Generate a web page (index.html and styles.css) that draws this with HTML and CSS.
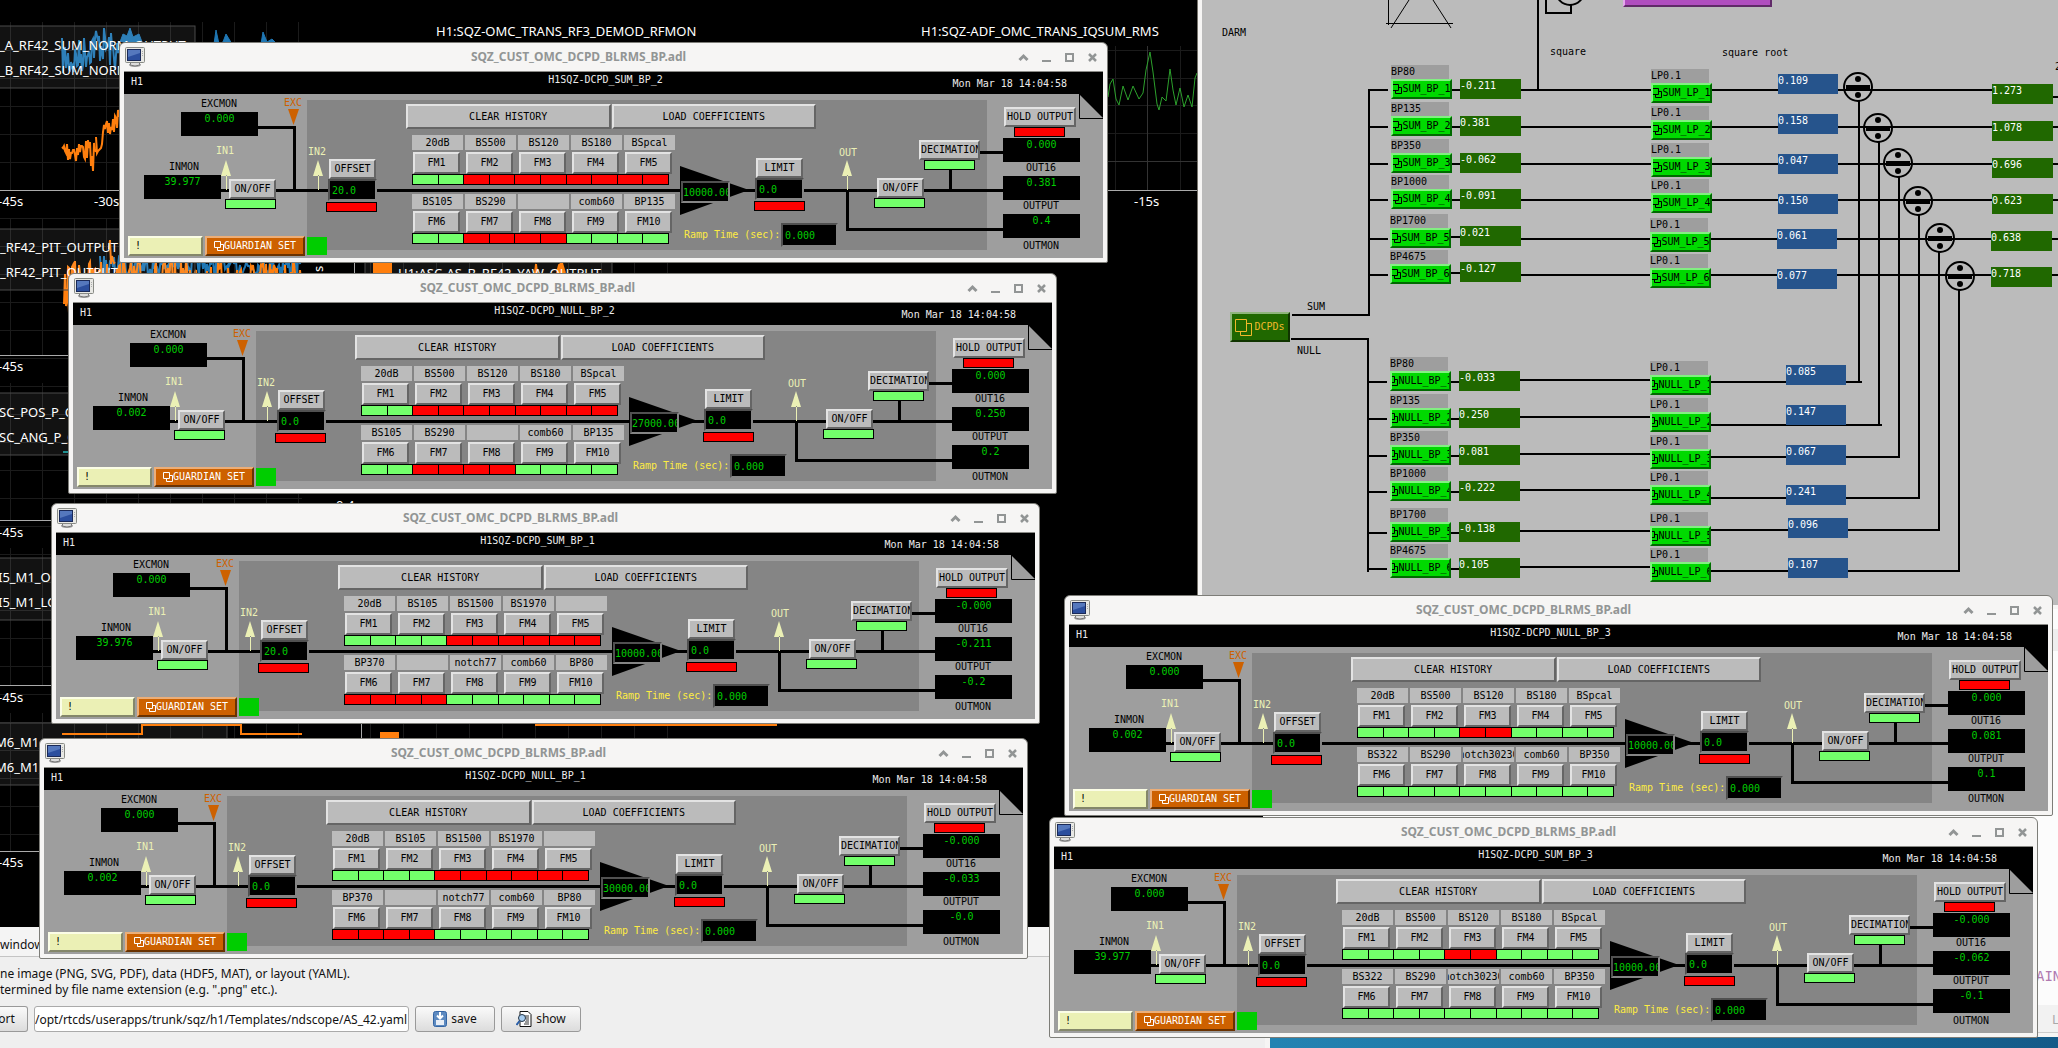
FILE: index.html
```html
<!DOCTYPE html>
<html lang="en">
<head>
<meta charset="utf-8">
<title>SQZ control room desktop</title>
<link rel="stylesheet" href="styles.css">
</head>
<body>
<svg class="sprites" aria-hidden="true">
  <symbol id="monitor" viewBox="0 0 20 20">
    <ellipse cx="10" cy="18" rx="6" ry="2" fill="#aaa"/>
    <path d="M6 15h8l1 3q-5 2-10 0z" fill="#ddd" stroke="#777"/>
    <rect x=".5" y=".5" width="19" height="15" rx="1" fill="#e8e8e4" stroke="#888a85"/>
    <rect x="2.500" y="2.500" width="13" height="11" fill="#2c4f9e" stroke="#1b2a58"/>
    <path d="M3 3h12v3L3 10z" fill="#5578bd"/>
    <path d="M17.500 4v5" stroke="#aaa" stroke-dasharray="1 1"/>
  </symbol>
  <symbol id="related" viewBox="0 0 10 10">
    <path d="M.5.5h6v6h-6zM6.500 3.500h3v6h-6v-3" fill="none" stroke="currentColor"/>
  </symbol>
</svg>

<div class="desktop">
  <section class="scope" aria-label="ndscope plots">
    <svg class="plots" id="plots"></svg>
  </section>

  <section class="export">
    <div class="tabs">window</div>
    <p class="hint">ne image (PNG, SVG, PDF), data (HDF5, MAT), or layout (YAML).<br>termined by file name extension (e.g. ".png" etc.).</p>
    <form class="actions">
      <button type="button" class="export-btn">ort</button>
      <input type="text" class="path" aria-label="Export path" value="/opt/rtcds/userapps/trunk/sqz/h1/Templates/ndscope/AS_42.yaml">
      <button type="button" class="save">
        <svg width="14" height="16" viewBox="0 0 14 16"><rect x=".5" y=".5" width="13" height="15" rx="2" fill="#5d8ac0" stroke="#3465a4"/><rect x="3" y="9" width="8" height="5" fill="#e8eef6"/><path d="M7 1v6M4 4.500l3 3 3-3" stroke="#fff" stroke-width="2" fill="none"/></svg>
        save</button>
      <button type="button" class="show">
        <svg width="16" height="16" viewBox="0 0 16 16"><path d="M4 .5h8l3 3v12H4z" fill="#fff" stroke="#111"/><path d="M9 5h4M10 7h3M10 9h3M9 11h4M8 13h5" stroke="#333"/><circle cx="6" cy="7" r="3.500" fill="#a8cdf0" stroke="#234"/><path d="M3.500 10L.5 14" stroke="#2a5ea8" stroke-width="2"/></svg>
        show</button>
    </form>
  </section>

  <section class="editor">
    <div class="editor-bar"></div>
    <div class="editor-code">AIN</div>
    <div class="editor-foot">L</div>
  </section>

  <section class="diagram" id="diagram" aria-label="SQZ BLRMS overview"></section>
  <div id="windows"></div>
</div>
<script src="app.js"></script>
</body>
</html>
```

FILE: styles.css
```css
* { box-sizing: border-box; }
body { margin: 0; font-family: "Noto Sans", sans-serif; background: #000; }
.sprites { position: absolute; width: 0; height: 0; }
.desktop {
  position: relative;
  min-height: 100vh;
  overflow: hidden;
  background: linear-gradient(90deg, #2383b2 62%, #145a88);
}
button, input { font: inherit; color: inherit; margin: 0; padding: 0; border-radius: 0; }

/* ndscope plots and export panel */
.scope { position: absolute; left: 0; top: 0; width: 1263px; height: 927px; background: #000; overflow: hidden; }
.plots { display: block; width: 100%; height: 100%; }
.plots text { fill: #fff; font: 13px "Noto Sans", sans-serif; }
.export {
  position: absolute; left: 0; top: 927px; bottom: 0; width: 1270px;
  background: #efefef; border-right: 5px solid #f6f5f4;
  font-size: 12px; line-height: 16px; color: #111;
}
.tabs { height: 30px; padding-top: 8px; line-height: 20px; background: #f4f4f4; border-bottom: 1px solid #c4c4c4; }
.hint { margin: 0; padding-top: 9px; }
.actions { display: flex; gap: 6px; margin-top: 8px; }
.actions button {
  display: flex; align-items: center; justify-content: center; gap: 4px;
  width: 80px; height: 26px;
  background: linear-gradient(#fafafa, #dcdcdc);
  border: 1px solid #999; border-radius: 3px;
}
.actions .export-btn { width: 28px; padding-right: 14px; border-left: 0; border-radius: 0 3px 3px 0; }
.path { width: 375px; height: 26px; border: 1px solid #aaa; border-radius: 3px; background: #fff; }

/* editor window behind everything on the right */
.editor {
  position: absolute; left: 1263px; right: 0; top: 605px; bottom: 11px;
  display: flex; flex-direction: column;
  background: #fcfcfc; border-top: 4px solid #f6f5f4; border-bottom: 4px solid #f6f5f4;
}
.editor-bar { height: 22px; margin-top: 20px; background: #eee; }
.editor-code { flex: 1; padding: 315px 0 0 773px; overflow: hidden; font: 14px/20px "DejaVu Sans Mono", monospace; color: #b07ab0; white-space: nowrap; }
.editor-foot { height: 28px; padding-left: 789px; font-size: 13px; line-height: 28px; color: #aaa; background: #f2f2f2; border-bottom: 1px solid #ccc; }

/* small fixed-pitch text used by every MEDM screen */
.medm, .diagram { font: 10px/12px "DejaVu Sans Mono", monospace; color: #000; white-space: nowrap; }

/* MEDM windows */
.medm {
  position: absolute; width: 989px; height: 221px;
  padding: 0 4px 4px;
  background: #f6f5f4; border: 1px solid #7d7d78; border-radius: 6px 6px 2px 2px;
  overflow: hidden;
}
.titlebar {
  display: flex; align-items: center; gap: 8px;
  height: 29px; padding: 0 3px 0 1px; border-bottom: 1px solid #8a8a86;
  font: bold 12px/18px "Noto Sans", sans-serif; color: #929595;
}
.titlebar h2 { flex: 1; margin: 0; padding-right: 4px; font: inherit; text-align: center; }
.titlebar button { display: grid; place-items: center; width: 15px; height: 15px; border: 0; background: none; }
.screen { position: relative; height: 186px; background: #9e9e9e; }
.head { display: flex; justify-content: space-between; height: 22px; padding: 2px 36px 0 7px; background: #000; color: #ececec; }
.head .name { padding-left: 14px; }
.head span:first-child { padding-top: 2px; width: 114px; }
.head time { padding-top: 4px; width: 115px; text-align: right; }
.fade { position: absolute; left: 183px; top: 28px; width: 680px; height: 150px; background: #858585; }
.wires { position: absolute; left: 0; top: 0; width: 979px; height: 186px; }

.lab { position: absolute; text-align: center; width: 78px; }
.mon { position: absolute; width: 77px; height: 24px; padding-top: 1px; background: #000; color: #00cd00; text-align: center; }
.btn { border: 2px solid; border-color: #e3e3e3 #656565 #656565 #e3e3e3; background: #bbb; text-align: center; overflow: hidden; white-space: nowrap; }
.btn.place { position: absolute; width: 47px; height: 20px; line-height: 16px; }
.entry { position: absolute; width: 49px; height: 22px; padding: 0 0 0 2px; border: 2px solid; border-color: #505050 #858585 #858585 #505050; background: #000; color: #00cd00; }
.led { position: absolute; width: 51px; height: 10px; border: 1px solid #000; background: #73ff6b; }
.led.off { background: #f00; }

.l-exc { left: 56px; top: 26px; }
.m-exc { left: 57px; top: 40px; }
.l-excpt { left: 130px; top: 25px; color: #cd6100; }
.l-in { left: 21px; top: 89px; }
.m-in { left: 20px; top: 103px; }
.l-in1 { left: 62px; top: 73px; color: #ebf0b5; }
.l-in2 { left: 154px; top: 74px; color: #ebf0b5; }
.l-outpt { left: 685px; top: 75px; color: #ebf0b5; }
.b-in { left: 105px; top: 107px; }
.d-in { left: 101px; top: 127px; }
.b-off { left: 205px; top: 87px; }
.e-off { left: 204px; top: 107px; }
.d-off { left: 202px; top: 130px; }
.b-lim { left: 632px; top: 86px; }
.e-lim { left: 631px; top: 106px; }
.d-lim { left: 630px; top: 129px; }
.medm .e-gain { left: 557px; top: 109px; padding-left: 0; }
.l-ramp { left: 560px; top: 157px; width: 98px; color: #fdec42; text-align: left; }
.medm .e-ramp { left: 657px; top: 151px; width: 57px; height: 24px; }
.b-out { left: 753px; top: 106px; }
.d-out { left: 750px; top: 126px; }
.medm .b-dec { left: 795px; top: 68px; width: 61px; }
.d-dec { left: 800px; top: 88px; }
.medm .b-hold { left: 880px; top: 35px; width: 72px; }
.d-hold { left: 890px; top: 55px; }
.m-o1 { left: 879px; top: 66px; }
.m-o2 { left: 879px; top: 104px; }
.m-o3 { left: 879px; top: 142px; }
.l-o1 { left: 878px; top: 90px; }
.l-o2 { left: 878px; top: 128px; }
.l-o3 { left: 878px; top: 168px; }

.bank { position: absolute; left: 282px; top: 32px; width: 410px; }
.bank-cmds { display: grid; grid-template-columns: 1fr 1fr; gap: 1px; height: 25px; }
.filters { display: grid; grid-template-columns: repeat(5, 51px); column-gap: 2px; margin: 6px 0 0 6px; row-gap: 2px; }
.filters + .filters { margin-top: 9px; }
.tag { height: 15px; line-height: 15px; background: #bbb; text-align: center; overflow: hidden; }
.long { display: flex; justify-content: center; }
.filters .btn { width: 47px; height: 22px; margin-left: 1px; line-height: 18px; }
.leds { grid-column: 1 / -1; display: grid; grid-template-columns: repeat(10, 1fr); width: 257px; height: 11px; margin-top: -2px; background: #000; gap: 1px; border: 1px solid #000; }
.leds i { background: #73ff6b; }
.leds i.off { background: #f00; }

.foot { position: absolute; left: 4px; top: 164px; display: flex; align-items: center; gap: 2px; }
.foot .note { width: 75px; height: 20px; padding: 2px 0 0 5px; border: 2px solid; border-color: #fbfde6 #84876a #84876a #fbfde6; background: #ebf0b5; }
.foot .guard { display: flex; align-items: center; justify-content: center; width: 100px; height: 20px; border: 2px solid; border-color: #ecae78 #6a3200 #6a3200 #ecae78; background: #cd6100; color: #fff; }
.ok { width: 20px; height: 18px; background: #00cd00; }

/* overview diagram */
.diagram { position: absolute; left: 1197px; right: 0; top: 0; height: 605px; border-left: 1px solid #77746c; background: #f6f5f4; padding-left: 4px; }
.canvas { position: relative; height: 100%; background: #bbb; overflow: hidden; }
.canvas > svg { position: absolute; left: 0; top: 0; width: 856px; height: 605px; }
.canvas > p { position: absolute; margin: 0; }
.link { position: absolute; width: 60px; }
.link p { margin: 0; height: 14px; width: 58px; line-height: 14px; background: #9e9e9e; }
.link a { display: flex; align-items: center; justify-content: center; width: 61px; height: 20px; border: 2px solid; border-color: #82f082 #006a00 #006a00 #82f082; background: #00d900; color: #000; text-decoration: none; overflow: hidden; line-height: 14px; }
.link svg, .guard svg { flex: none; }
.read { position: absolute; width: 61px; height: 20px; padding-top: 1px; background: #206800; color: #fff; }
.read.root { width: 60px; background: #26548c; }
.dcpds { position: absolute; left: 28px; top: 312px; display: flex; align-items: center; justify-content: center; gap: 2px; width: 60px; height: 30px; border: 2px solid; border-color: #8fb57c #103400 #103400 #8fb57c; background: #206800; color: #f0b82a; text-decoration: none; }
.purple { position: absolute; left: 421px; top: 0; width: 149px; height: 7px; background: #b04ebf; border: 2px solid; border-color: transparent #602a68 #602a68 #e4a8ec; border-top: 0; }
```

FILE: app.js
```js
const icon = (id, s) => `<svg width="${s}" height="${s}"><use href="#${id}"/></svg>`;

/* ---------- MEDM filter windows ---------- */
const G = true, R = false;
const base = ['20dB', 'BS500', 'BS120', 'BS180', 'BSpcal'];
const base1 = ['20dB', 'BS105', 'BS1500', 'BS1970', ''];
const screens = [
  { x: 119, y: 42, name: 'SUM_BP_2', inmon: '39.977', offset: '20.0', gain: '10000.00', out: ['0.000', '0.381', '0.4'],
    a: base, b: ['BS105', 'BS290', '', 'comb60', 'BP135'], la: [G, R, R, R, R], lb: [G, R, R, G, G] },
  { x: 68, y: 273, name: 'NULL_BP_2', inmon: '0.002', offset: '0.0', gain: '27000.00', out: ['0.000', '0.250', '0.2'],
    a: base, b: ['BS105', 'BS290', '', 'comb60', 'BP135'], la: [G, R, R, R, R], lb: [G, R, R, G, G] },
  { x: 51, y: 503, name: 'SUM_BP_1', inmon: '39.976', offset: '20.0', gain: '10000.00', out: ['-0.000', '-0.211', '-0.2'],
    a: base1, b: ['BP370', '', 'notch77', 'comb60', 'BP80'], la: [G, G, R, R, R], lb: [R, R, G, G, G] },
  { x: 39, y: 738, name: 'NULL_BP_1', inmon: '0.002', offset: '0.0', gain: '30000.00', out: ['-0.000', '-0.033', '-0.0'],
    a: base1, b: ['BP370', '', 'notch77', 'comb60', 'BP80'], la: [G, G, R, R, R], lb: [R, R, G, G, G] },
  { x: 1064, y: 595, name: 'NULL_BP_3', inmon: '0.002', offset: '0.0', gain: '10000.00', out: ['0.000', '0.081', '0.1'],
    a: base, b: ['BS322', 'BS290', 'notch30230', 'comb60', 'BP350'], la: [G, G, R, G, G], lb: [G, G, G, G, G] },
  { x: 1049, y: 817, name: 'SUM_BP_3', inmon: '39.977', offset: '0.0', gain: '10000.00', out: ['-0.000', '-0.062', '-0.1'],
    a: base, b: ['BS322', 'BS290', 'notch30230', 'comb60', 'BP350'], la: [G, G, R, G, G], lb: [G, G, G, G, G] },
];

const bank = (tags, leds, first) => `
  <div class="filters">
    ${tags.map(t => `<span class="tag${t.length > 8 ? ' long' : ''}">${t}</span>`).join('')}
    ${tags.map((t, i) => `<button class="btn">FM${first + i}</button>`).join('')}
    <div class="leds">${leds.map(on => `<i class="${on ? '' : 'off'}"></i>`.repeat(2)).join('')}</div>
  </div>`;

const arrow = (x, y) => `<path d="M${x} ${y}l-5 16h10zM${x} ${y + 15}h1v15h-1z" fill="#ebf0b5"/>`;

const win = s => `
<section class="medm" style="left:${s.x}px;top:${s.y}px">
  <header class="titlebar">${icon('monitor', 20)}<h2>SQZ_CUST_OMC_DCPD_BLRMS_BP.adl</h2>
    <button aria-label="Shade"><svg width="11" height="9" viewBox="0 0 11 9"><path d="M1.500 7l4-4 4 4" fill="none" stroke="#929595" stroke-width="3"/></svg></button>
    <button aria-label="Minimize"><svg width="9" height="9"><path d="M0 8h9" stroke="#929595" stroke-width="2"/></svg></button>
    <button aria-label="Maximize"><svg width="9" height="9"><rect x="1" y="1" width="7" height="7" fill="none" stroke="#929595" stroke-width="2"/></svg></button>
    <button aria-label="Close"><svg width="9" height="9"><path d="M1 1l7 7M8 1l-7 7" stroke="#929595" stroke-width="2.500"/></svg></button>
  </header>
  <div class="screen">
    <div class="head"><span>H1</span><span class="name">H1SQZ-DCPD_${s.name}</span><time>Mon Mar 18 14:04:58</time></div>
    <div class="fade"></div>
    <svg class="wires">
      <path d="M134 55.500H170.500V118M97 118.500H879M723.500 118V157.500H879M826.500 98V118M856 80.500H879" fill="none" stroke="#000" stroke-width="3"/>
      <path d="M164 37h11l-5.500 16z" fill="#cd6100"/>
      ${arrow(102, 88)}${arrow(194, 88)}${arrow(723, 88)}
      <path d="M556 94l69 24-69 25z"/>
      <path d="M955 22h24v24z"/><path d="M955.500 22v24.500H979" fill="none" stroke="#000"/>
    </svg>
    <span class="lab l-exc">EXCMON</span><output class="mon m-exc">0.000</output>
    <span class="lab l-excpt">EXC</span><span class="lab l-in1">IN1</span><span class="lab l-in2">IN2</span>
    <span class="lab l-in">INMON</span><output class="mon m-in">${s.inmon}</output>
    <button class="btn place b-in">ON/OFF</button><i class="led d-in"></i>
    <button class="btn place b-off">OFFSET</button><input class="entry e-off" aria-label="Offset" value="${s.offset}"><i class="led off d-off"></i>
    <div class="bank">
      <div class="bank-cmds"><button class="btn">CLEAR HISTORY</button><button class="btn">LOAD COEFFICIENTS</button></div>
      ${bank(s.a, s.la, 1)}${bank(s.b, s.lb, 6)}
    </div>
    <input class="entry e-gain" aria-label="Gain" value="${s.gain}">
    <button class="btn place b-lim">LIMIT</button><input class="entry e-lim" aria-label="Limit" value="0.0"><i class="led off d-lim"></i>
    <label class="ramp"><span class="lab l-ramp">Ramp Time (sec):</span><input class="entry e-ramp" value="0.000"></label>
    <span class="lab l-outpt">OUT</span>
    <button class="btn place b-out">ON/OFF</button><i class="led d-out"></i>
    <button class="btn place b-dec">DECIMATION</button><i class="led d-dec"></i>
    <button class="btn place b-hold">HOLD OUTPUT</button><i class="led off d-hold"></i>
    <output class="mon m-o1">${s.out[0]}</output><span class="lab l-o1">OUT16</span>
    <output class="mon m-o2">${s.out[1]}</output><span class="lab l-o2">OUTPUT</span>
    <output class="mon m-o3">${s.out[2]}</output><span class="lab l-o3">OUTMON</span>
    <div class="foot"><div class="note">!</div><button class="guard">${icon('related', 10)}GUARDIAN SET</button><i class="ok"></i></div>
  </div>
</section>`;
document.getElementById('windows').innerHTML = screens.map(win).join('');

/* ---------- overview diagram (coordinates are inside the canvas) ---------- */
const X = v => v - 1202;
const names = ['BP80', 'BP135', 'BP350', 'BP1000', 'BP1700', 'BP4675'];
const sum = { bp: ['-0.211', '0.381', '-0.062', '-0.091', '0.021', '-0.127'], lp: ['0.109', '0.158', '0.047', '0.150', '0.061', '0.077'],
  ratio: ['1.273', '1.078', '0.696', '0.623', '0.638', '0.718'] };
const nul = { bp: ['-0.033', '0.250', '0.081', '-0.222', '-0.138', '0.105'], lp: ['0.085', '0.147', '0.067', '0.241', '0.096', '0.107'] };
const sumTop = [65, 102, 139, 175, 214, 250], sumY = [90, 127, 164, 200, 239, 275];
const rootTop = [74, 114, 154, 194, 229, 269], ratioTop = [84, 121, 158, 194, 231, 267];
const nulTop = [357, 394, 431, 467, 508, 544], nulRoot = [365, 405, 445, 485, 518, 558];
const nulOut = [382, 425, 457, 498, 530, 571];
const circles = [[1858, 87], [1878, 128], [1898, 163], [1918, 201], [1940, 238], [1960, 276]];
let nodes = '', d = '', marks = '';
const link = (x, y, tag, name) => { nodes += `<div class="link" style="left:${X(x)}px;top:${y}px"><p>${tag}</p><a href="#">${icon('related', 10)}${name}</a></div>`; };
const read = (x, y, v, c = '') => { nodes += `<output class="read ${c}" style="left:${X(x)}px;top:${y}px">${v}</output>`; };
const h = (x1, x2, y) => { d += `M${X(x1)} ${y}H${X(x2)}`; };
const v = (x, y1, y2) => { d += `M${X(x)} ${y1}V${y2}`; };
for (let i = 0; i < 6; i++) {
  const o = i > 3 ? 1 : 0;
  link(1391 - o, sumTop[i], names[i], `SUM_BP_${i + 1}`);
  read(1460, [79, 116, 153, 189, 226, 262][i], sum.bp[i]);
  link(1651 - o, sumTop[i] + 4, 'LP0.1', `SUM_LP_${i + 1}`);
  read(1778 - o, rootTop[i], sum.lp[i], 'root');
  read(1992 - o, ratioTop[i], sum.ratio[i]);
  h(1369, 1388, sumY[i]); h(1450, 1462, o ? sumY[i] - 2 : sumY[i]); h(1520, 1994, sumY[i]);
  h(2052, 2058, i ? sumY[i] : 97);
  link(1390, nulTop[i], names[i], `NULL_BP_${i + 1}`);
  read(1459, nulTop[i] + 14, nul.bp[i]);
  link(1650, nulTop[i] + 4, 'LP0.1', `NULL_LP_${i + 1}`);
  read(i > 3 ? 1788 : 1786, nulRoot[i], nul.lp[i], 'root');
  h(1367, 1387, nulTop[i] + 25); h(1450, 1460, nulTop[i] + 25); h(1519, 1651, nulTop[i] + 23);
  h(1710, 1860 + 20 * i + (i < 2 ? 2 : 0), nulOut[i]);
  const [cx, cy] = circles[i];
  v(1859 + 20 * i, cy + 14, nulOut[i] + 1);
  marks += `<g transform="translate(${X(cx)} ${cy})"><circle r="14" fill="none" stroke="#000" stroke-width="2"/><path d="M-12-2h24v5h-24z"/><circle cy="-8" r="3"/><circle cy="8" r="3"/></g>`;
}
v(1369, 89, 316); h(1292, 1370, 315); v(1368, 338, 572); h(1291, 1369, 339); v(1538, 0, 90);
document.getElementById('diagram').innerHTML = `<div class="canvas">
  <svg><path d="${d}" fill="none" stroke="#000" stroke-width="2"/>${marks}
    <path d="M186.500 0V25M184 23.500H251M207 0L189 28M231 0l18 28" fill="none" stroke="#000"/>
    <path d="M344 0V13H369V5" fill="none" stroke="#000" stroke-width="2"/><circle cx="368" cy="-9" r="14" fill="none" stroke="#000" stroke-width="2"/></svg>
  <div class="purple"></div>
  <p style="left:${X(1222)}px;top:27px">DARM</p><p style="left:${X(1550)}px;top:46px">square</p>
  <p style="left:${X(1722)}px;top:47px">square root</p><p style="left:${X(2055)}px;top:61px">2</p>
  <p style="left:${X(1307)}px;top:301px">SUM</p><p style="left:${X(1297)}px;top:345px">NULL</p>
  <a class="dcpds" href="#"><svg width="17" height="17"><path d="M.5.5h11v12H.5zM11.500 4.500h5v12h-11v-4" fill="none" stroke="currentColor"/></svg>DCPDs</a>${nodes}</div>`;

/* ---------- ndscope plots ---------- */
let seed = 7;
const rnd = () => (seed = (seed * 16807) % 2147483647) / 2147483647;
const trace = (x1, x2, mid, amp, color, step = 1, w = 2) => {
  let p = '';
  for (let x = x1; x <= x2; x += step) p += `${x},${Math.round(mid(x) + (rnd() - .5) * amp)} `;
  return `<polyline points="${p}" fill="none" stroke="${color}" stroke-width="${w}"/>`;
};
const blue = '#1f77b4', orange = '#ff7f0e';
let grid = '';
for (let x = 10; x < 302; x += 32) grid += `M${x}.5 22V190M${x}.5 218V355M${x}.5 383V520M${x}.5 548V685M${x}.5 713V851`;
for (let y = 50; y < 860; y += 28) grid += `M0 ${y}.5H302`;
for (let x = 370; x < 700; x += 33) grid += `M${x}.5 263V273M${x}.5 724V738`;
const legend = (y, hgt, w = 196, x = -1) => `<rect x="${x}" y="${y}" width="${w}" height="${hgt}" fill="#fff" fill-opacity=".07" stroke="#4a4a4a"/>`;
const t = (x, y, s) => `<text x="${x}" y="${y}">${s}</text>`;
document.getElementById('plots').innerHTML = `
  <path d="${grid}" stroke="#1b1b1b" fill="none"/>
  <path d="M1115.500 46V190M1180.500 46V190M1108 50.500H1197M1108 78.500H1197M1108 105.500H1197M1108 133.500H1197" stroke="#1b1b1b"/>
  <path d="M1147.500 46V190M1108 161.500H1197" stroke="#333"/>
  ${trace(62, 119, x => 52 + 8 * Math.sin(x / 9), 38, blue)}
  <path d="M120 42l3-8 4 2 3-8 3 9 6-3 3 8M214 44l2-14 3 14 4-2 3-8 6 10M261 44l2-12 4 10 5-3 5 5" fill="${blue}" stroke="${blue}"/>
  ${trace(62, 90, () => 150, 24, orange)}${trace(90, 96, x => 150 + (x < 94 ? (x - 90) * 6 : 0), 20, orange)}${trace(96, 119, x => 145 - (x - 96) * 1.2, 22, orange)}
  ${trace(100, 301, () => 266, 20, blue)}${trace(66, 301, () => 280, 40, orange)}
  ${trace(64, 69, () => 290, 50, orange)}${trace(109, 115, () => 256, 34, orange)}
  ${legend(26, 62)}${legend(229, 61)}${legend(229, 61, 247, 365)}${legend(393, 62)}${legend(558, 62)}${legend(723, 62, 228)}
  <path d="M0 190.500H119M1108 190.500H1197M0 355.500H68M0 520.500H51M0 685.500H51M0 851.500H39M354.500 263V273M361.500 724V738" stroke="#aaa"/>
  ${t(-1, 50, '_A_RF42_SUM_NORM_OUTPUT')}${t(-1, 75, '_B_RF42_SUM_NORM_')}
  ${t(0, 252, '_RF42_PIT_OUTPUT')}${t(0, 277, '_RF42_PIT_OUTPUT')}
  ${t(-1, 417, 'SC_POS_P_O')}${t(-1, 442, 'SC_ANG_P_O')}
  ${t(-2, 582, 'I5_M1_O')}${t(-2, 607, 'I5_M1_LO')}${t(-5, 747, 'M6_M1_')}${t(-5, 772, 'M6_M1_')}
  ${[206, 371, 537, 702, 867].map(y => t(-2, y, '-45s')).join('')}${t(94, 206, '-30s')}${t(1134, 206, '-15s')}
  <path d="M63 452H68" stroke="#1f8f8f" stroke-width="2"/>
  <text transform="translate(323 272) rotate(-90)">s</text>
  <path d="M373 263h19v11h-19zM380 732h19v6h-19z" fill="${orange}"/><path d="M535 725H777" stroke="${orange}" stroke-width="2"/>
  <path d="M535 273l1-9 1 9M557 273l2-8 3-2 3 10" stroke="${orange}" stroke-width="2" fill="${orange}"/>
  <path d="M62 734H142V725H241V734H302" fill="none" stroke="${orange}" stroke-width="2"/>
  ${t(398, 278, 'H1:ASC-AS_B_RF42_YAW_OUTPUT')}${t(336, 510, '0.4')}
  ${t(436, 36, 'H1:SQZ-OMC_TRANS_RF3_DEMOD_RFMON')}${t(921, 36, 'H1:SQZ-ADF_OMC_TRANS_IQSUM_RMS')}
  <polyline points="1108,97 1110,84 1113,79 1116,99 1119,105 1123,86 1128,100 1133,86 1139,99 1143,93 1146,70 1150,52 1153,72 1157,104 1159,110 1162,97 1166,101 1170,69 1173,90 1176,105 1180,88 1184,107 1188,95 1192,107 1195,78 1197,73" fill="none" stroke="#2ca02c"/>`;
```
